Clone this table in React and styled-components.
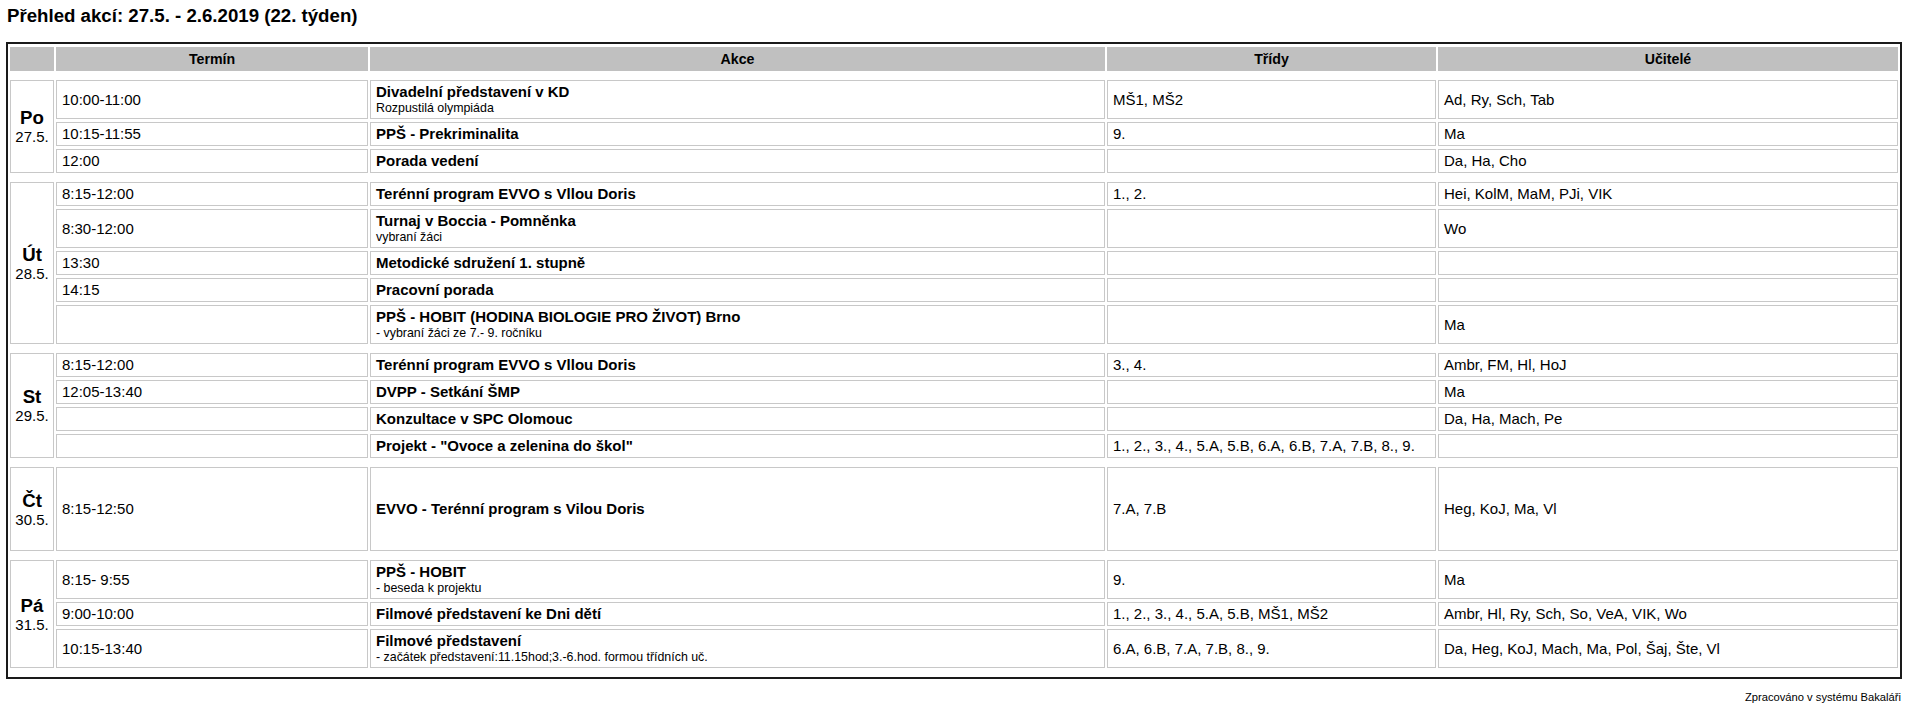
import React, { Fragment } from 'react';
import styled, { createGlobalStyle } from 'styled-components';

const GlobalStyle = createGlobalStyle`
  html, body { margin: 0; padding: 0; background: #fff; }
  body { font-family: "Liberation Sans", Arial, sans-serif; color: #000; }
`;

const Page = styled.div`
  padding: 5px 7px 0 6px;
`;

const Title = styled.h2`
  margin: 0 0 16px 1px;
  font-size: 18.67px;
  font-weight: bold;
  line-height: 21px;
`;

const Table = styled.table`
  width: 1896px;
  table-layout: fixed;
  border: 2px solid #1a1a1a;
  border-collapse: separate;
  border-spacing: 2px 3px;
`;

const Col = styled.col`
  width: ${(p) => p.$w}px;
`;

const HeadCell = styled.th`
  box-sizing: border-box;
  background: #c0c0c0;
  border: 1px solid #c0c0c0;
  padding: 2px 4px;
  font-size: 14.2px;
  line-height: 18px;
  font-weight: bold;
  text-align: center;
`;

const Spacer = styled.td`
  height: 3px;
  padding: 0;
  border: 0;
  font-size: 0;
  line-height: 0;
`;

const Cell = styled.td`
  box-sizing: border-box;
  border: 1px solid #c8c8c8;
  padding: 2px 5px;
  font-size: 15px;
  line-height: 18px;
  vertical-align: middle;
  text-align: left;
  overflow: hidden;
  white-space: nowrap;
`;

const DayCell = styled(Cell)`
  height: 84px;
  padding: 2px 0;
  text-align: center;
`;

const DayName = styled.div`
  font-size: 18.67px;
  font-weight: bold;
  line-height: 20px;
`;

const DayDate = styled.div`
  font-size: 15px;
  line-height: 17px;
`;

const EventTitle = styled.div`
  font-size: 15px;
  font-weight: bold;
  line-height: 18px;
`;

const EventSub = styled.div`
  font-size: 12.4px;
  line-height: 15px;
`;

const Footer = styled.div`
  margin-top: 12px;
  text-align: right;
  font-size: 11.2px;
  line-height: 13px;
`;

const columns = [44, 312, 735, 329, 460];

const days = [
  {
    day: 'Po',
    date: '27.5.',
    rows: [
      { time: '10:00-11:00', title: 'Divadelní představení v KD', sub: 'Rozpustilá olympiáda', classes: 'MŠ1, MŠ2', teachers: 'Ad, Ry, Sch, Tab' },
      { time: '10:15-11:55', title: 'PPŠ - Prekriminalita', classes: '9.', teachers: 'Ma' },
      { time: '12:00', title: 'Porada vedení', classes: '', teachers: 'Da, Ha, Cho' },
    ],
  },
  {
    day: 'Út',
    date: '28.5.',
    rows: [
      { time: '8:15-12:00', title: 'Terénní program EVVO s Vllou Doris', classes: '1., 2.', teachers: 'Hei, KolM, MaM, PJi, VIK' },
      { time: '8:30-12:00', title: 'Turnaj v Boccia - Pomněnka', sub: 'vybraní žáci', classes: '', teachers: 'Wo' },
      { time: '13:30', title: 'Metodické sdružení 1. stupně', classes: '', teachers: '' },
      { time: '14:15', title: 'Pracovní porada', classes: '', teachers: '' },
      { time: '', title: 'PPŠ - HOBIT (HODINA BIOLOGIE PRO ŽIVOT) Brno', sub: '- vybraní žáci ze 7.- 9. ročníku', classes: '', teachers: 'Ma' },
    ],
  },
  {
    day: 'St',
    date: '29.5.',
    rows: [
      { time: '8:15-12:00', title: 'Terénní program EVVO s Vllou Doris', classes: '3., 4.', teachers: 'Ambr, FM, Hl, HoJ' },
      { time: '12:05-13:40', title: 'DVPP - Setkání ŠMP', classes: '', teachers: 'Ma' },
      { time: '', title: 'Konzultace v SPC Olomouc', classes: '', teachers: 'Da, Ha, Mach, Pe' },
      { time: '', title: 'Projekt - "Ovoce a zelenina do škol"', classes: '1., 2., 3., 4., 5.A, 5.B, 6.A, 6.B, 7.A, 7.B, 8., 9.', teachers: '' },
    ],
  },
  {
    day: 'Čt',
    date: '30.5.',
    rows: [
      { time: '8:15-12:50', title: 'EVVO - Terénní program s Vilou Doris', classes: '7.A, 7.B', teachers: 'Heg, KoJ, Ma, Vl' },
    ],
  },
  {
    day: 'Pá',
    date: '31.5.',
    rows: [
      { time: '8:15-\u00a09:55', title: 'PPŠ - HOBIT', sub: '- beseda k projektu', classes: '9.', teachers: 'Ma' },
      { time: '9:00-10:00', title: 'Filmové představení ke Dni dětí', classes: '1., 2., 3., 4., 5.A, 5.B, MŠ1, MŠ2', teachers: 'Ambr, Hl, Ry, Sch, So, VeA, VIK, Wo' },
      { time: '10:15-13:40', title: 'Filmové představení', sub: '- začátek představení:11.15hod;3.-6.hod. formou třídních uč.', classes: '6.A, 6.B, 7.A, 7.B, 8., 9.', teachers: 'Da, Heg, KoJ, Mach, Ma, Pol, Šaj, Šte, Vl' },
    ],
  },
];

const SpacerRow = () => (
  <tr>
    <Spacer colSpan={5} />
  </tr>
);

export default function App() {
  return (
    <Page>
      <GlobalStyle />
      <Title>Přehled akcí: 27.5. - 2.6.2019 (22. týden)</Title>
      <Table>
        <colgroup>
          {columns.map((w, i) => (
            <Col key={i} $w={w} />
          ))}
        </colgroup>
        <thead>
          <tr>
            <HeadCell />
            <HeadCell>Termín</HeadCell>
            <HeadCell>Akce</HeadCell>
            <HeadCell>Třídy</HeadCell>
            <HeadCell>Učitelé</HeadCell>
          </tr>
          <SpacerRow />
        </thead>
        <tbody>
          {days.map((d) => (
            <Fragment key={d.day}>
              {d.rows.map((r, i) => (
                <tr key={i}>
                  {i === 0 && (
                    <DayCell rowSpan={d.rows.length}>
                      <DayName>{d.day}</DayName>
                      <DayDate>{d.date}</DayDate>
                    </DayCell>
                  )}
                  <Cell>{r.time}</Cell>
                  <Cell>
                    <EventTitle>{r.title}</EventTitle>
                    {r.sub && <EventSub>{r.sub}</EventSub>}
                  </Cell>
                  <Cell>{r.classes}</Cell>
                  <Cell>{r.teachers}</Cell>
                </tr>
              ))}
              <SpacerRow />
            </Fragment>
          ))}
        </tbody>
      </Table>
      <Footer>Zpracováno v systému Bakaláři</Footer>
    </Page>
  );
}
